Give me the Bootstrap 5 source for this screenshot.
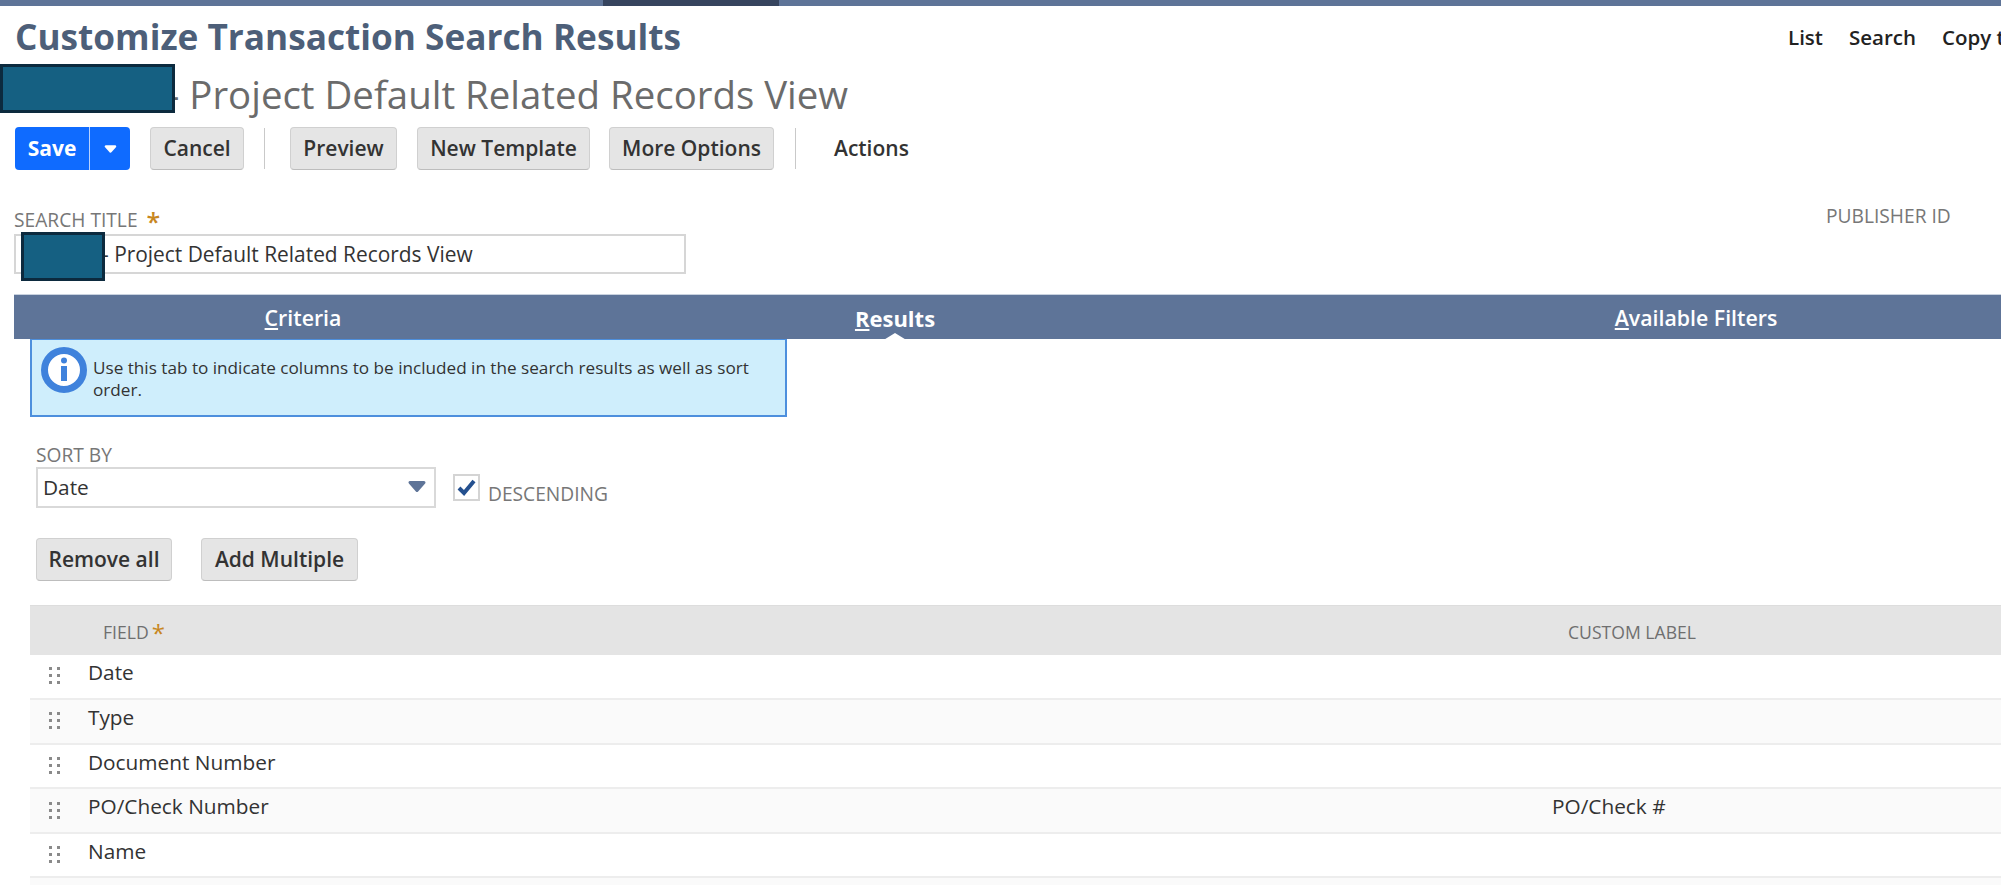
<!DOCTYPE html>
<html lang="en">
<head>
<meta charset="utf-8">
<title>Customize Transaction Search Results</title>
<link href="https://cdn.jsdelivr.net/npm/bootstrap@5.3.0/dist/css/bootstrap.min.css" rel="stylesheet">
<style>
html,body{height:885px;overflow:hidden;background:#fff}
body{font-family:"Open Sans","Liberation Sans",sans-serif;color:#333;width:2001px}
.topstrip{height:6px;background:#5e7498}
.topstrip-seg{width:176px;margin-left:603px;background:#36445e}
.head-row{padding:6px 0 0 15px;height:58px}
.page-title{font-size:35.2px;font-weight:700;color:#4d5f79;margin:0;line-height:48px;white-space:nowrap}
.head-nav{gap:26px;font-size:20.5px;font-weight:600;color:#222;margin-top:10px;width:213px;overflow:hidden;white-space:nowrap;flex:none}
.sub-wrap{height:63px;padding-left:167px}
.sub-title{font-size:38.4px;line-height:50px;color:#6b6b6b;margin:0;padding-top:5px;white-space:nowrap}
.redact{position:absolute;background:#156082;border:3px solid #0c2a3e}
.redact-a{left:0;top:0;width:175px;height:49px}
.redact-b{left:5px;top:-4px;width:84px;height:49px}
.tool-row{padding-left:15px;height:43px}
.nbtn{height:43px;padding:0;font-size:21px;font-weight:600;color:#333;background:#e5e5e5;border:1px solid #d0d0d0;border-bottom-color:#bdbdbd;border-radius:4px;white-space:nowrap}
.savegrp{width:115px;height:43px;background:#0f6bff;border-radius:4px;color:#fff;font-size:21px;font-weight:700}
.savegrp-l{width:75px;border-right:1px solid #b8d2ff}
.savegrp-r{width:40px}
.vsep{width:1px;height:41px;background:#c9c9c9}
.act-lbl{font-size:21px;font-weight:600;color:#333;margin-left:38px}
.fld-lbl{font-size:19.2px;color:#777;line-height:22px;text-transform:uppercase}
.req{color:#c8871f;font-size:25px;line-height:16px;font-weight:600;vertical-align:-4px}
.title-row{padding:39px 0 0 14px;height:124px}
.title-col{width:1812px}
.title-input{width:672px;height:40px;border:2px solid #d6d6d6;background:#fff;font-size:20.9px;line-height:36px;color:#333;padding-left:86px;margin-top:3px;white-space:nowrap}
.pub-lbl{margin-top:-4px}
.tabbar{margin-left:14px;height:45px;background:#5e7498;border-top:1px solid #c9d2df;display:grid;grid-template-columns:578px 606px 996px;overflow:hidden;width:1987px}
.tabitem{color:#fff;font-size:21.3px;line-height:46px;text-align:center;font-weight:600;white-space:nowrap}
.tabitem-on{font-weight:700;font-size:22px;position:relative}
.tabitem-on::after{content:"";position:absolute;left:50%;bottom:0;margin-left:-13px;border:13px solid transparent;border-top:0;border-bottom:8px solid #fff}
.panel{padding-left:30px}
.infobox{width:757px;height:78px;background:#cfeefc;border:2px solid #4d8fdd;border-top-width:1px;font-size:17.15px;line-height:22px;color:#333}
.info-ico{width:46px;height:46px;flex:none;margin:7px 6px 0 9px}
.info-txt{padding-top:17px;width:680px}
.sort-wrap{padding:27px 0 0 6px}
.sort-lbl{line-height:22px;height:23px}
.sel-box{width:400px;height:41px;border:2px solid #d9d9d9;font-size:20.8px;line-height:36px;padding:0 0 2px 5px;color:#333}
.sel-arrow{width:20px;height:13px;margin-right:7px}
.chk-box{width:27px;height:27px;border:2px solid #d4d4d4;margin:7px 8px 0 17px;flex:none}
.chk-lbl{padding-top:16px}
.btn-row{padding:30px 0 0 6px;gap:29px}
.nbtn-rm{width:136px}
.nbtn-add{width:157px}
.fldtable{width:1971px;margin-top:24px;table-layout:fixed;border-collapse:collapse}
.fldtable th{background:#e4e4e4;height:49px;font-weight:400;font-size:17.6px;color:#6f6f6f;padding:3px 0 0;vertical-align:middle;text-transform:uppercase;border-top:1px solid #ddd}
.fldtable td{height:44.6px;padding:0 0 7px;font-size:20.8px;color:#333;border-bottom:2px solid #ededed;vertical-align:middle}
.fldtable tbody tr:nth-child(even) td{background:#fafafa}
.c-h{width:58px}.c-f{width:1464px}
.th-f{padding-left:15px!important}
.th-c{padding-left:16px!important}
.grip{width:11px;height:17px;display:block;margin:6px 0 0 19px}
.req-sm{font-size:24px;line-height:10px;margin-left:3px;vertical-align:-3px;color:#c8871f}
.ms-btn1{margin-left:20px;width:94px}
.sep1{margin-left:20px}
.btn2{margin-left:25px;width:107px}
.btn3{margin-left:20px;width:173px}
.btn4{margin-left:19px;width:165px}
.sep2{margin-left:21px}
</style>
</head>
<body>
<div class="topstrip"><div class="topstrip-seg h-100"></div></div>

<div class="head-row d-flex justify-content-between">
  <h1 class="page-title">Customize Transaction Search Results</h1>
  <div class="head-nav d-flex"><span>List</span><span>Search</span><span>Copy to Account</span></div>
</div>

<div class="sub-wrap position-relative">
  <p class="sub-title">- Project Default Related Records View</p>
  <div class="redact redact-a"></div>
</div>

<div class="tool-row d-flex align-items-center">
  <div class="savegrp d-flex">
    <div class="savegrp-l d-flex align-items-center justify-content-center">Save</div>
    <div class="savegrp-r d-flex align-items-center justify-content-center">
      <svg width="13" height="8" viewBox="0 0 13 8"><path d="M2 1.500h9L6.500 6.500z" fill="#fff" stroke="#fff" stroke-width="2.500" stroke-linejoin="round"/></svg>
    </div>
  </div>
  <button type="button" class="nbtn ms-btn1">Cancel</button>
  <div class="vsep sep1"></div>
  <button type="button" class="nbtn btn2">Preview</button>
  <button type="button" class="nbtn btn3">New Template</button>
  <button type="button" class="nbtn btn4">More Options</button>
  <div class="vsep sep2"></div>
  <span class="act-lbl">Actions</span>
</div>

<div class="title-row d-flex">
  <div class="title-col">
    <div class="fld-lbl">Search Title <span class="req ms-1">*</span></div>
    <div class="title-input position-relative">- Project Default Related Records View<div class="redact redact-b"></div></div>
  </div>
  <div class="fld-lbl pub-lbl">Publisher ID</div>
</div>

<div class="tabbar">
  <div class="tabitem"><u>C</u>riteria</div>
  <div class="tabitem tabitem-on"><u>R</u>esults</div>
  <div class="tabitem"><u>A</u>vailable Filters</div>
</div>

<div class="panel">
  <div class="infobox d-flex">
    <svg class="info-ico" viewBox="0 0 46 46"><circle cx="23" cy="23" r="19.500" fill="#fff" stroke="#3f82dc" stroke-width="7"/><circle cx="23" cy="13.500" r="3" fill="#3f82dc"/><path d="M20 19h6v15h-6z" fill="#3f82dc"/></svg>
    <div class="info-txt">Use this tab to indicate columns to be included in the search results as well as sort order.</div>
  </div>
  <div class="sort-wrap">
    <div class="fld-lbl sort-lbl">Sort by</div>
    <div class="d-flex">
      <div class="sel-box d-flex justify-content-between align-items-center">
        <span>Date</span>
        <svg class="sel-arrow" viewBox="0 0 20 13"><path d="M3 2.500h14L10 10.500z" fill="#5e7498" stroke="#5e7498" stroke-width="3" stroke-linejoin="round"/></svg>
      </div>
      <div class="chk-box d-flex align-items-center justify-content-center">
        <svg width="21" height="19" viewBox="0 0 21 19"><path d="M3 10l5 5L18 3" fill="none" stroke="#24508f" stroke-width="4"/></svg>
      </div>
      <div class="fld-lbl chk-lbl">Descending</div>
    </div>
  </div>
  <div class="btn-row d-flex">
    <button type="button" class="nbtn nbtn-rm">Remove all</button>
    <button type="button" class="nbtn nbtn-add">Add Multiple</button>
  </div>
  <table class="fldtable">
    <colgroup><col class="c-h"><col class="c-f"><col></colgroup>
    <thead><tr><th></th><th class="th-f">Field<span class="req-sm">*</span></th><th class="th-c">Custom Label</th></tr></thead>
    <tbody>
      <tr><td><svg class="grip" viewBox="0 0 11 17" fill="#8a8a8a"><rect width="3" height="3"/><rect x="8" width="3" height="3"/><rect y="7" width="3" height="3"/><rect x="8" y="7" width="3" height="3"/><rect y="14" width="3" height="3"/><rect x="8" y="14" width="3" height="3"/></svg></td><td>Date</td><td></td></tr>
      <tr><td><svg class="grip" viewBox="0 0 11 17" fill="#8a8a8a"><rect width="3" height="3"/><rect x="8" width="3" height="3"/><rect y="7" width="3" height="3"/><rect x="8" y="7" width="3" height="3"/><rect y="14" width="3" height="3"/><rect x="8" y="14" width="3" height="3"/></svg></td><td>Type</td><td></td></tr>
      <tr><td><svg class="grip" viewBox="0 0 11 17" fill="#8a8a8a"><rect width="3" height="3"/><rect x="8" width="3" height="3"/><rect y="7" width="3" height="3"/><rect x="8" y="7" width="3" height="3"/><rect y="14" width="3" height="3"/><rect x="8" y="14" width="3" height="3"/></svg></td><td>Document Number</td><td></td></tr>
      <tr><td><svg class="grip" viewBox="0 0 11 17" fill="#8a8a8a"><rect width="3" height="3"/><rect x="8" width="3" height="3"/><rect y="7" width="3" height="3"/><rect x="8" y="7" width="3" height="3"/><rect y="14" width="3" height="3"/><rect x="8" y="14" width="3" height="3"/></svg></td><td>PO/Check Number</td><td>PO/Check #</td></tr>
      <tr><td><svg class="grip" viewBox="0 0 11 17" fill="#8a8a8a"><rect width="3" height="3"/><rect x="8" width="3" height="3"/><rect y="7" width="3" height="3"/><rect x="8" y="7" width="3" height="3"/><rect y="14" width="3" height="3"/><rect x="8" y="14" width="3" height="3"/></svg></td><td>Name</td><td></td></tr>
      <tr><td></td><td></td><td></td></tr>
    </tbody>
  </table>
</div>
</body>
</html>
